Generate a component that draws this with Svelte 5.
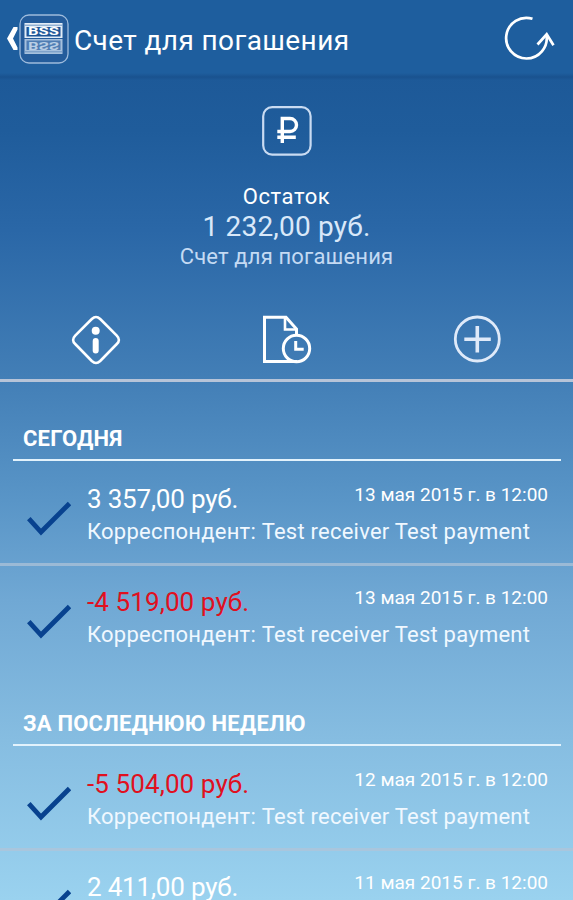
<script lang="ts">
  type Payment = { amount: string; date: string };
  type Group = { title: string; kind: string; items: Payment[] };

  const groups: Group[] = [
    {
      title: 'СЕГОДНЯ',
      kind: 'today',
      items: [
        { amount: '3 357,00 руб.', date: '13 мая 2015 г. в 12:00' },
        { amount: '-4 519,00 руб.', date: '13 мая 2015 г. в 12:00' }
      ]
    },
    {
      title: 'ЗА ПОСЛЕДНЮЮ НЕДЕЛЮ',
      kind: 'week',
      items: [
        { amount: '-5 504,00 руб.', date: '12 мая 2015 г. в 12:00' },
        { amount: '2 411,00 руб.', date: '11 мая 2015 г. в 12:00' }
      ]
    }
  ];
</script>

<div class="screen">
  <header>
    <svg class="back" width="12" height="28" viewBox="0 0 12 28">
      <path d="M11.5 2H7.5L1 13.5 7.5 25h4V22.5L7 13.5l4.5-9z" fill="#fff" />
    </svg>
    <svg class="logo" width="50" height="50" viewBox="0 0 50 50">
      <rect x="1" y="1" width="48" height="48" rx="9" fill="#245c9b" stroke="#9dbbdc" stroke-width="1.3" />
      <rect x="5.5" y="9" width="38" height="15" fill="#e2edf7" />
      <rect x="5.5" y="25" width="38" height="15" fill="#a6c0dd" />
      <path d="M5.5 11.2h38M5.5 37.8h38" stroke="#6f96c2" stroke-width="1" />
      <rect x="7.5" y="13" width="34" height="9.5" fill="#1d5597" />
      <rect x="7.5" y="26.5" width="34" height="9.5" fill="#4f7db3" />
      <text class="mark" x="9" y="21.4" textLength="31" lengthAdjust="spacingAndGlyphs" fill="#fff">BSS</text>
      <!-- reflection of the mark -->
      <text class="mark" x="9" y="21.4" textLength="31" lengthAdjust="spacingAndGlyphs" fill="#b9cee5" transform="translate(0 49) scale(1 -1)">BSS</text>
    </svg>
    <h1>Счет для погашения</h1>
    <svg class="refresh" width="52" height="48" viewBox="0 0 52 48" fill="none" stroke="#fff" stroke-width="2.7">
      <path d="M29.5 3.8A20.3 20.3 0 1 0 43.5 20" />
      <path d="M34.5 29.5l9.2-10.2 6.8 11" />
    </svg>
  </header>

  <section class="account">
    <svg class="ruble" width="50" height="50" viewBox="0 0 50 50" fill="none">
      <rect x="1.2" y="1.2" width="47.4" height="47.4" rx="9" stroke="#c9dbf2" stroke-width="2.2" />
      <path d="M20.3 37V12.5h7.7a6.3 6.3 0 0 1 0 13H15.3M15.3 31.3h18.5" stroke="#fff" stroke-width="3.4" />
    </svg>
    <p class="label">Остаток</p>
    <p class="balance">1 232,00 руб.</p>
    <p class="name">Счет для погашения</p>

    <div class="actions">
      <svg width="50" height="50" viewBox="0 0 50 50" fill="none" stroke="#fff">
        <path d="M20.8 4Q25 0 29.2 4L45.8 20.6Q50 25 45.8 29L29.2 46Q25 50 20.8 46L4.2 29Q0 25 4.2 20.6Z" stroke-width="2.6" />
        <circle cx="24.7" cy="15.8" r="4" fill="#fff" stroke="none" />
        <path d="M24.7 26v9.5" stroke-width="6" stroke-linecap="round" />
      </svg>
      <svg width="50" height="50" viewBox="0 0 50 50" fill="none" stroke="#fff" stroke-width="3">
        <path d="M35 46.5H2.5V2.3h21.5L34.5 14v6" />
        <path d="M23 3v11.5h11.5" stroke-width="2.6" />
        <circle cx="34.5" cy="33.5" r="13.2" />
        <path d="M33.7 26v8.3h8" />
      </svg>
      <svg width="50" height="50" viewBox="0 0 50 50" fill="none" stroke="#dfeaf9">
        <circle cx="25.3" cy="24" r="22" stroke-width="2.8" />
        <path d="M25.3 11v26.5M12.3 24.2h26.5" stroke-width="3.6" />
      </svg>
    </div>
  </section>

  {#each groups as group}
    <section class={group.kind}>
      <h2><span>{group.title}</span></h2>
      {#each group.items as item}
        <div class="payment">
          <svg class="check" width="44" height="36" viewBox="0 0 44 36">
            <path d="M1.8 17.7l12.2 13.3L42.5 2.5" fill="none" stroke="#08428f" stroke-width="4.8" />
          </svg>
          <div class="info">
            <div class="top">
              <span class="sum" class:negative={item.amount.startsWith('-')}>{item.amount}</span>
              <span class="date">{item.date}</span>
            </div>
            <p>Корреспондент: Test receiver Test payment</p>
          </div>
        </div>
      {/each}
    </section>
  {/each}
</div>

<style>
  :global(body) {
    margin: 0;
  }

  .screen {
    height: 900px;
    overflow: hidden;
    font-family: Roboto, 'Noto Sans', sans-serif;
    color: #fff;
    background: linear-gradient(#1d5998 75px, #1f5c9b 130px, #2a67a7 230px, #427eb6 375px, #5995c7 500px, #70a8d4 600px, #86bde1 740px, #9ad2ef 900px);
  }

  h1,
  h2,
  p {
    margin: 0;
    font-weight: 400;
    white-space: nowrap;
  }

  svg {
    flex-shrink: 0;
  }

  header {
    display: flex;
    align-items: center;
    box-sizing: border-box;
    height: 80px;
    padding: 0 18px 2px 6px;
    background: linear-gradient(#1e5e9e 73px, #19528f 77px, #1d5998 80px);
  }

  .back {
    margin-right: 1px;
  }

  .mark {
    font-size: 10.5px;
    font-weight: 700;
  }

  h1 {
    margin: 3px 0 0 5px;
    font-size: 28px;
    line-height: 40px;
    letter-spacing: 0.4px;
  }

  .refresh {
    margin-left: auto;
  }

  .account {
    display: flex;
    flex-direction: column;
    align-items: center;
    box-sizing: border-box;
    height: 302px;
    padding-top: 26px;
    border-bottom: 3px solid #b7c4d8;
    line-height: 30px;
  }

  .label {
    margin-top: 25.5px;
    font-size: 22px;
    letter-spacing: 0.6px;
  }

  .balance {
    color: #d9e8f9;
    font-size: 28px;
    letter-spacing: 0.2px;
  }

  .name {
    color: #c4daf3;
    font-size: 22px;
    letter-spacing: 0.15px;
  }

  .actions {
    display: flex;
    justify-content: space-between;
    align-self: stretch;
    margin: 43px 71px 0;
  }

  h2 {
    display: flex;
    align-items: center;
    box-sizing: border-box;
    height: 79px;
    margin: 0 12px 0 13px;
    padding: 36px 0 0 10px;
    border-bottom: 2px solid #e2f2fc;
    font-size: 22px;
    font-weight: 700;
    letter-spacing: 0.2px;
  }

  .payment {
    display: flex;
    box-sizing: border-box;
    height: 104px;
    padding: 20px 25px 0 27px;
    border-bottom: 3px solid #9bbad6;
  }

  h2 + .payment {
    height: 105px;
    padding-top: 22px;
  }

  .payment:last-child {
    height: 101px;
    border-bottom: none;
  }

  .week .payment {
    border-color: #a9c6dd;
  }

  .check {
    margin: 18px 16px 0 0;
  }

  .info {
    flex: 1;
    min-width: 0;
  }

  .top {
    display: flex;
    justify-content: space-between;
    height: 33px;
    line-height: 32px;
  }

  .sum {
    font-size: 26px;
    letter-spacing: -0.2px;
  }

  .negative {
    color: #e01020;
    letter-spacing: 0.1px;
  }

  .date {
    font-size: 19px;
    line-height: 23px;
  }

  .info p {
    color: #f0f8ff;
    font-size: 22px;
    line-height: 32px;
    letter-spacing: 0.23px;
  }
</style>
